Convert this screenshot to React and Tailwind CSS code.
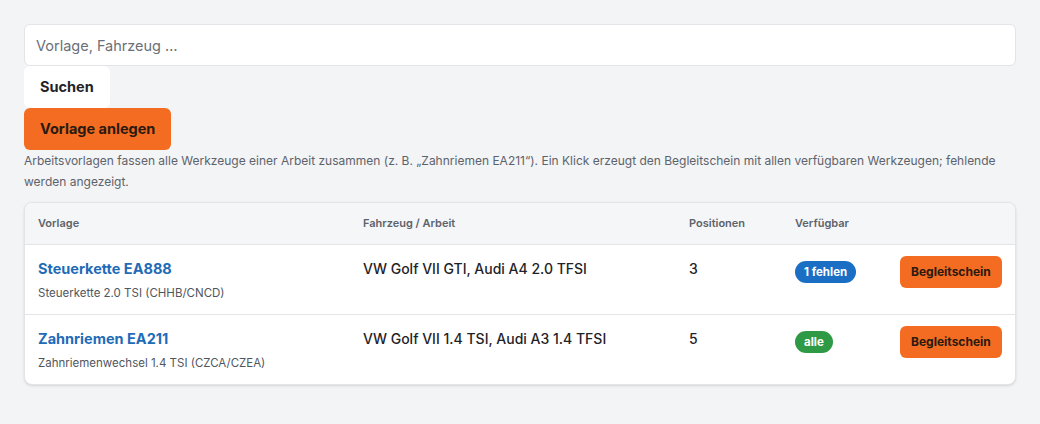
import React from 'react';

const rows = [
  {
    name: 'Steuerkette EA888',
    desc: 'Steuerkette 2.0 TSI (CHHB/CNCD)',
    vehicle: 'VW Golf VII GTI, Audi A4 2.0 TFSI',
    count: 3,
    badge: '1 fehlen',
    badgeClass: 'bg-[#1a6fc4]',
  },
  {
    name: 'Zahnriemen EA211',
    desc: 'Zahnriemenwechsel 1.4 TSI (CZCA/CZEA)',
    vehicle: 'VW Golf VII 1.4 TSI, Audi A3 1.4 TFSI',
    count: 5,
    badge: 'alle',
    badgeClass: 'bg-[#2f9a45]',
  },
];

export default function App() {
  return (
    <div className="min-h-screen bg-[#f3f4f6] px-6 pt-6 font-['Inter',sans-serif] text-[#1f2328]">
      <input
        className="block h-[42px] w-full rounded-md border border-[#e2e4e8] bg-white px-[11px] text-[14.5px] placeholder:text-[#6b7078] outline-none"
        placeholder="Vorlage, Fahrzeug …"
      />
      <button className="block h-[42px] rounded-md bg-white px-4 text-[14.5px] font-bold text-[#1f2328]">
        Suchen
      </button>
      <button className="block h-[42px] rounded-md bg-[#f36c21] px-4 text-[14.5px] font-bold text-[#2a1a10]">
        Vorlage anlegen
      </button>
      <p className="text-[12px] leading-[21px] text-[#5d636b]">
        Arbeitsvorlagen fassen alle Werkzeuge einer Arbeit zusammen (z. B. „Zahnriemen EA211“). Ein Klick erzeugt den Begleitschein mit allen verfügbaren Werkzeugen; fehlende werden angezeigt.
      </p>
      <div className="mt-[10px] overflow-hidden rounded-lg border border-[#e2e4e8] bg-white shadow-sm">
        <table className="w-full table-fixed border-collapse text-left">
          <thead>
            <tr className="h-[41px] border-b border-[#e2e4e8] bg-[#f5f6f8] text-[11px] font-semibold text-[#5d636b]">
              <th className="w-[338px] pl-[13px] font-semibold">Vorlage</th>
              <th className="w-[326px] font-semibold">Fahrzeug / Arbeit</th>
              <th className="w-[106px] font-semibold">Positionen</th>
              <th className="w-[105px] font-semibold">Verfügbar</th>
              <th></th>
            </tr>
          </thead>
          <tbody>
            {rows.map((r, i) => (
              <tr key={r.name} className={`h-[70px] align-top ${i === 0 ? 'border-b border-[#e2e4e8]' : ''}`}>
                <td className="pl-[13px] pt-[14px]">
                  <div className="text-[14.5px] font-bold leading-[20px] text-[#1e6bb8]">{r.name}</div>
                  <div className="mt-[6px] text-[11.5px] leading-[16px] text-[#50565e]">{r.desc}</div>
                </td>
                <td className="pt-[14px] text-[14px] font-medium leading-[20px]">{r.vehicle}</td>
                <td className="pt-[14px] text-[14px] font-medium leading-[20px]">{r.count}</td>
                <td className="pt-[13px]">
                  <span className={`inline-block rounded-full px-[9px] text-[11.5px] font-bold leading-[22px] text-white ${r.badgeClass}`}>
                    {r.badge}
                  </span>
                </td>
                <td className="pt-[11px]">
                  <button className="h-[32px] rounded-md bg-[#f36c21] px-[11px] text-[12px] font-bold text-[#2a1a10]">
                    Begleitschein
                  </button>
                </td>
              </tr>
            ))}
          </tbody>
        </table>
      </div>
    </div>
  );
}
